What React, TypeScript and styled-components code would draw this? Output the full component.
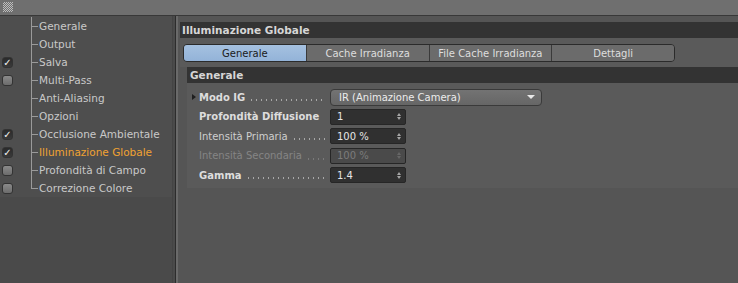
import { Fragment } from "react";
import styled, { createGlobalStyle } from "styled-components";

const GlobalStyle = createGlobalStyle`
  html, body {
    margin: 0;
    padding: 0;
    background: #555555;
  }
  * {
    box-sizing: border-box;
  }
`;

const Frame = styled.div`
  width: 738px;
  height: 283px;
  overflow: hidden;
  display: flex;
  flex-direction: column;
  font-family: "DejaVu Sans", "Liberation Sans", sans-serif;
  color: #cacaca;
`;

const TopBar = styled.div`
  height: 16px;
  flex: none;
  background: #6f6f6f;
  border-bottom: 1px solid #383838;
  padding: 2px 0 0 3px;
`;

const Grip = styled.div`
  width: 10px;
  height: 10px;
  background: conic-gradient(
    #bdbdbd 25%,
    transparent 0 50%,
    #bdbdbd 0 75%,
    transparent 0
  );
  background-size: 2px 2px;
`;

const Main = styled.div`
  flex: 1;
  display: flex;
  min-height: 0;
`;

const Sidebar = styled.div`
  width: 175px;
  flex: none;
  display: flex;
  background: #4a4a4a;
`;

const TreeList = styled.ul`
  list-style: none;
  margin: 0;
  padding: 1px 0 0;
  width: 172px;
  align-self: flex-start;
  background: #4e4e4e;
`;

const TreeRow = styled.li<{ $last?: boolean }>`
  position: relative;
  height: 18px;
  display: flex;
  align-items: center;
  font-size: 10.5px;
  &::before {
    content: "";
    position: absolute;
    left: 31px;
    top: 0;
    height: ${(p) => (p.$last ? "9px" : "18px")};
    border-left: 1px solid #9a9a9a;
  }
  &::after {
    content: "";
    position: absolute;
    left: 31px;
    top: 9px;
    width: 7px;
    border-top: 1px solid #9a9a9a;
  }
`;

const CheckSlot = styled.div`
  width: 39px;
  flex: none;
  padding-left: 2px;
  display: flex;
  align-items: center;
`;

const Check = styled.div<{ $on?: boolean }>`
  width: 11px;
  height: 11px;
  border-radius: 3px;
  border: 1px solid #333333;
  background: ${(p) =>
    p.$on
      ? "linear-gradient(#2a2a2a, #3a3a3a)"
      : "linear-gradient(#8a8a8a, #6c6c6c)"};
  color: #f2f2f2;
  font-size: 10px;
  line-height: 9px;
  text-align: center;
`;

const TreeLabel = styled.span<{ $active?: boolean }>`
  color: ${(p) => (p.$active ? "#f0a232" : "#c9c9c9")};
  white-space: nowrap;
`;

const Gutter = styled.div`
  flex: 1;
  border-left: 1px solid #444444;
`;

const Splitter = styled.div`
  width: 3px;
  flex: none;
  border-left: 1px solid #2c2c2c;
  background: #6a6a6a;
`;

const Content = styled.div`
  flex: 1;
  background: #555555;
  padding: 6px 0 0 2px;
  display: flex;
  flex-direction: column;
`;

const TitleBar = styled.div`
  height: 16px;
  background: #333333;
  padding-left: 2px;
  font-size: 10.5px;
  font-weight: bold;
  line-height: 16px;
  color: #d6d6d6;
`;

const TabStrip = styled.div`
  background: #5a5a5a;
  padding: 6px 0 5px 3px;
`;

const Tabs = styled.div`
  display: flex;
  width: 492px;
  height: 18px;
  border: 1px solid #2b2b2b;
  border-radius: 4px;
  overflow: hidden;
`;

const Tab = styled.div<{ $active?: boolean }>`
  flex: 1;
  display: flex;
  align-items: center;
  justify-content: center;
  font-size: 10px;
  color: ${(p) => (p.$active ? "#1a1a1a" : "#dedede")};
  background: ${(p) =>
    p.$active ? "linear-gradient(#a5c1e0, #93b3d8)" : "#6b6b6b"};
  & + & {
    border-left: 1px solid #3a3a3a;
  }
`;

const Group = styled.div`
  margin-left: 7px;
  background: #5a5a5a;
`;

const GroupHead = styled.div`
  height: 16px;
  background: #333333;
  padding-left: 3px;
  font-size: 10.5px;
  font-weight: bold;
  line-height: 16px;
  color: #d6d6d6;
`;

const Fields = styled.div`
  display: grid;
  grid-template-columns: 138px auto;
  grid-auto-rows: 16px;
  row-gap: 3.5px;
  align-items: center;
  padding: 6px 0 5px 5px;
`;

const Label = styled.div<{ $bold?: boolean; $off?: boolean }>`
  display: flex;
  align-items: center;
  height: 16px;
  padding-left: 7px;
  padding-right: 4px;
  position: relative;
  font-size: 10px;
  font-weight: ${(p) => (p.$bold ? "bold" : "normal")};
  color: ${(p) => (p.$off ? "#858585" : p.$bold ? "#dddddd" : "#cfcfcf")};
  white-space: nowrap;
`;

const Caret = styled.span`
  position: absolute;
  left: 0;
  top: 5px;
  border-left: 4px solid #1e1e1e;
  border-top: 3.5px solid transparent;
  border-bottom: 3.5px solid transparent;
`;

const Dots = styled.span<{ $off?: boolean }>`
  flex: 1;
  height: 2px;
  align-self: flex-end;
  margin: 0 0 4px 4px;
  background-image: radial-gradient(
    circle,
    ${(p) => (p.$off ? "#7a7a7a" : "#a8a8a8")} 0.7px,
    transparent 1px
  );
  background-size: 5px 2px;
  background-repeat: repeat-x;
`;

const Select = styled.div`
  width: 212px;
  height: 17px;
  border: 1px solid #3a3a3a;
  border-radius: 4px;
  background: linear-gradient(#737373, #666666);
  display: flex;
  align-items: center;
  justify-content: space-between;
  padding: 0 6px 0 8px;
  font-size: 10px;
  color: #ececec;
`;

const SelectArrow = styled.span`
  border-top: 4px solid #e8e8e8;
  border-left: 4px solid transparent;
  border-right: 4px solid transparent;
`;

const Input = styled.div<{ $off?: boolean }>`
  width: 76px;
  height: 16px;
  border: 1px solid #262626;
  border-radius: 2px;
  background: ${(p) => (p.$off ? "#4a4a4a" : "#303030")};
  display: flex;
  align-items: center;
  justify-content: space-between;
  padding: 0 4px 0 6px;
  font-size: 10px;
  color: ${(p) => (p.$off ? "#7c7c7c" : "#e6e6e6")};
`;

const Spin = styled.span<{ $off?: boolean }>`
  display: flex;
  flex-direction: column;
  gap: 1px;
  &::before,
  &::after {
    content: "";
    border-left: 2.5px solid transparent;
    border-right: 2.5px solid transparent;
  }
  &::before {
    border-bottom: 3px solid ${(p) => (p.$off ? "#666" : "#a6a6a6")};
  }
  &::after {
    border-top: 3px solid ${(p) => (p.$off ? "#666" : "#a6a6a6")};
  }
`;

const tree = [
  { label: "Generale" },
  { label: "Output" },
  { label: "Salva", check: "on" },
  { label: "Multi-Pass", check: "off" },
  { label: "Anti-Aliasing" },
  { label: "Opzioni" },
  { label: "Occlusione Ambientale", check: "on" },
  { label: "Illuminazione Globale", check: "on", active: true },
  { label: "Profondità di Campo", check: "off" },
  { label: "Correzione Colore", check: "off" },
];

const tabs = ["Generale", "Cache Irradianza", "File Cache Irradianza", "Dettagli"];

const fields = [
  { label: "Profondità Diffusione", value: "1", bold: true, dots: false },
  { label: "Intensità Primaria", value: "100 %", dots: true },
  { label: "Intensità Secondaria", value: "100 %", dots: true, off: true },
  { label: "Gamma", value: "1.4", bold: true, dots: true },
];

export default function App() {
  return (
    <Frame>
      <GlobalStyle />
      <TopBar>
        <Grip />
      </TopBar>
      <Main>
        <Sidebar>
          <TreeList>
            {tree.map((item, i) => (
              <TreeRow key={item.label} $last={i === tree.length - 1}>
                <CheckSlot>
                  {item.check && <Check $on={item.check === "on"}>{item.check === "on" ? "✓" : ""}</Check>}
                </CheckSlot>
                <TreeLabel $active={item.active}>{item.label}</TreeLabel>
              </TreeRow>
            ))}
          </TreeList>
          <Gutter />
        </Sidebar>
        <Splitter />
        <Content>
          <TitleBar>Illuminazione Globale</TitleBar>
          <TabStrip>
            <Tabs>
              {tabs.map((t, i) => (
                <Tab key={t} $active={i === 0}>
                  {t}
                </Tab>
              ))}
            </Tabs>
          </TabStrip>
          <Group>
            <GroupHead>Generale</GroupHead>
            <Fields>
              <Label $bold>
                <Caret />
                Modo IG
                <Dots />
              </Label>
              <Select>
                IR (Animazione Camera)
                <SelectArrow />
              </Select>
              {fields.map((f) => (
                <Fragment key={f.label}>
                  <Label $bold={f.bold} $off={f.off}>
                    {f.label}
                    {f.dots && <Dots $off={f.off} />}
                  </Label>
                  <Input $off={f.off}>
                    {f.value}
                    <Spin $off={f.off} />
                  </Input>
                </Fragment>
              ))}
            </Fields>
          </Group>
        </Content>
      </Main>
    </Frame>
  );
}
